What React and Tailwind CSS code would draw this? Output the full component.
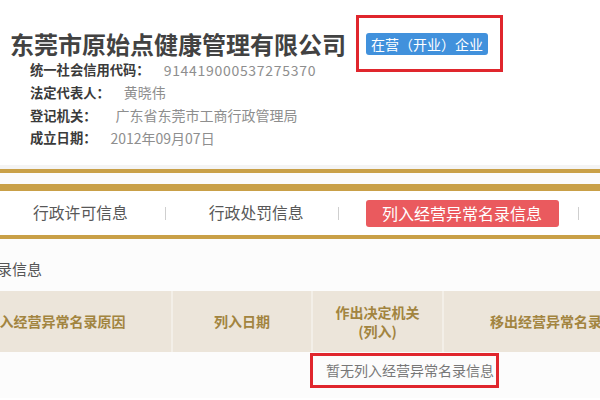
export default function App() {
  const rows = [
    { label: "统一社会信用代码：", value: "914419000537275370", gap: "ml-[14px]", digits: true },
    { label: "法定代表人：", value: "黄晓伟", gap: "ml-[14px]" },
    { label: "登记机关：", value: "广东省东莞市工商行政管理局", gap: "ml-[19px]" },
    { label: "成立日期：", value: "2012年09月07日", gap: "ml-[14px]" },
  ];
  return (
    <div
      className="w-[600px] h-[400px] overflow-hidden bg-white relative"
      style={{ fontFamily: '"Noto Sans CJK SC", "Noto Sans", sans-serif' }}
    >
      {/* header */}
      <div className="h-[165px] bg-white">
        <div className="flex items-center pt-[15px] pl-[10px] h-[72px]">
          <div className="text-[24px] font-bold text-[#424242] leading-none whitespace-nowrap">
            东莞市原始点健康管理有限公司
          </div>
          <div className="ml-[10px] w-[147px] h-[57px] border-[3px] border-[#e0262d] flex items-center pl-[7px]">
            <div className="h-[22px] w-[122px] rounded-[3px] bg-[#4191dc] text-white text-[14px] leading-none flex items-center justify-center whitespace-nowrap">
              在营（开业）企业
            </div>
          </div>
        </div>
        <div className="mt-[-13px] pl-[30px]">
          {rows.map((r) => (
            <div key={r.label} className="h-[22.6px] flex items-center whitespace-nowrap">
              <span className="text-[13.3px] font-bold text-[#3a3a3a]">{r.label}</span>
              <span
                className={`${r.gap} text-[14px] text-[#8e8e8e] ${r.digits ? "tracking-[0.7px]" : ""}`}
              >
                {r.value}
              </span>
            </div>
          ))}
        </div>
      </div>
      {/* gold lines + tabs */}
      <div className="h-[4px] bg-[#f4f4f4]" />
      <div className="h-[4px] bg-[#c9a047]" />
      <div className="h-[11px] bg-[#fbfbfb]" />
      <div className="h-[7px] bg-[#c9a047]" />
      <div className="h-[44px] bg-white flex items-center pl-[33px] whitespace-nowrap text-[#585858] text-[15.8px]">
        <span>行政许可信息</span>
        <span className="ml-[37px] w-px h-[13px] bg-[#cfcfcf]" />
        <span className="ml-[43px]">行政处罚信息</span>
        <span className="ml-[34px] w-px h-[13px] bg-[#cfcfcf]" />
        <span className="ml-[27px] w-[193px] h-[27px] rounded-[3px] bg-[#ea5a5e] text-white text-[16px] flex items-center justify-center">
          列入经营异常名录信息
        </span>
        <span className="ml-[19px] w-px h-[13px] bg-[#cfcfcf]" />
      </div>
      <div className="h-[4px] bg-[#c9a047]" />
      {/* section title */}
      <div className="h-[52px] bg-[#fcfcfc] flex items-center">
        <span className="ml-[-3px] mt-[8px] text-[15px] text-[#555] whitespace-nowrap">录信息</span>
      </div>
      {/* table header */}
      <div className="h-[61px] bg-[#ece5da] ml-[-60px] w-[800px] grid grid-cols-[233px_140px_131px_232px] text-[14px] font-bold text-[#a2843f] whitespace-nowrap">
        <div className="flex items-center justify-center border-r-2 border-[#f3efe8]">列入经营异常名录原因</div>
        <div className="flex items-center justify-center border-r-2 border-[#f3efe8]">列入日期</div>
        <div className="flex flex-col items-center justify-center leading-[19px] border-r-2 border-[#f3efe8]">
          <span>作出决定机关</span>
          <span>(列入)</span>
        </div>
        <div className="flex items-center justify-center">移出经营异常名录原因</div>
      </div>
      {/* body */}
      <div className="h-[46px] bg-[#fcfcfc] pl-[310px] pt-[1px]">
        <div className="w-[189px] h-[35px] border-[3px] border-[#e0262d] flex items-center pl-[13px] text-[14px] text-[#777] whitespace-nowrap">
          暂无列入经营异常名录信息
        </div>
      </div>
    </div>
  );
}
